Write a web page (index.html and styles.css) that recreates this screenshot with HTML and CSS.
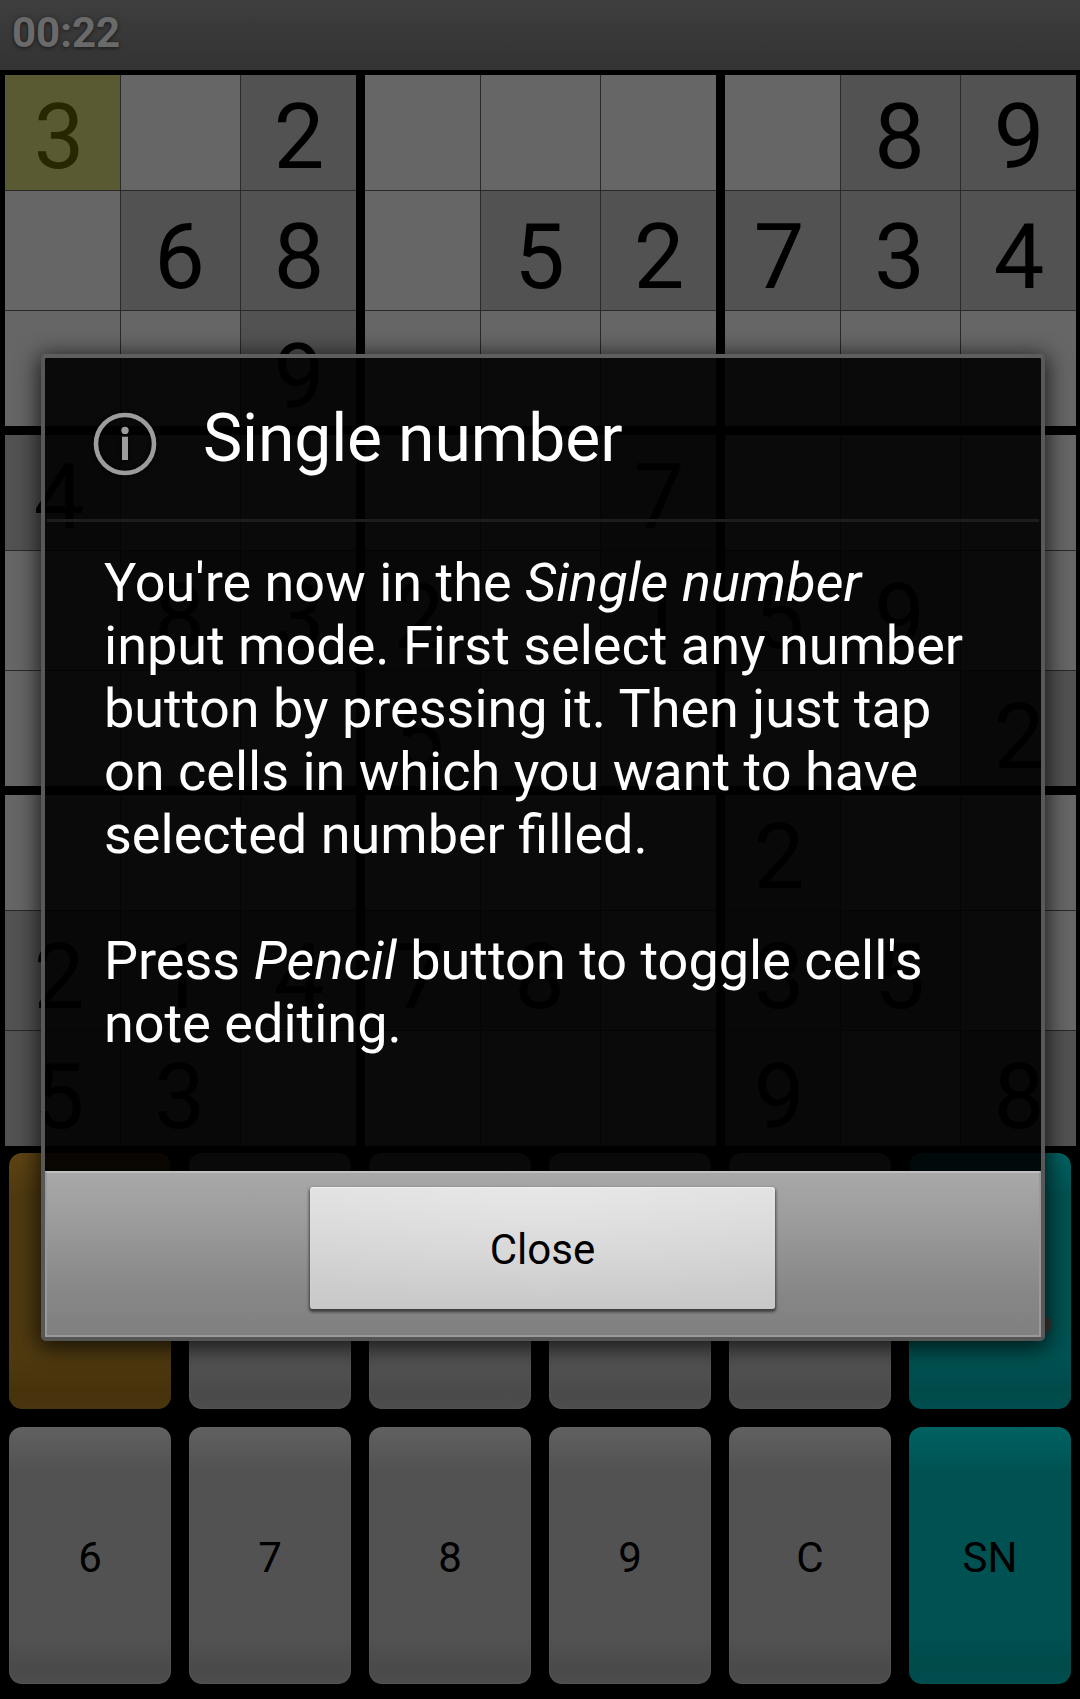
FILE: index.html
```html
<!DOCTYPE html>
<html lang="en">
<head>
<meta charset="utf-8">
<title>Sudoku</title>
<link rel="stylesheet" href="styles.css">
</head>
<body>
<div class="screen">
  <header class="status">00:22</header>

  <main class="board">
    <section class="box">
      <div class="cell selected">3</div><div class="cell"></div><div class="cell given">2</div>
      <div class="cell"></div><div class="cell given">6</div><div class="cell given">8</div>
      <div class="cell"></div><div class="cell"></div><div class="cell given">9</div>
    </section>
    <section class="box">
      <div class="cell"></div><div class="cell"></div><div class="cell"></div>
      <div class="cell"></div><div class="cell given">5</div><div class="cell given">2</div>
      <div class="cell"></div><div class="cell"></div><div class="cell"></div>
    </section>
    <section class="box">
      <div class="cell"></div><div class="cell given">8</div><div class="cell given">9</div>
      <div class="cell given">7</div><div class="cell given">3</div><div class="cell given">4</div>
      <div class="cell"></div><div class="cell"></div><div class="cell"></div>
    </section>
    <section class="box">
      <div class="cell given">4</div><div class="cell"></div><div class="cell"></div>
      <div class="cell"></div><div class="cell given">8</div><div class="cell given">3</div>
      <div class="cell"></div><div class="cell"></div><div class="cell"></div>
    </section>
    <section class="box">
      <div class="cell"></div><div class="cell"></div><div class="cell given">7</div>
      <div class="cell given">2</div><div class="cell"></div><div class="cell given">1</div>
      <div class="cell given">5</div><div class="cell"></div><div class="cell"></div>
    </section>
    <section class="box">
      <div class="cell"></div><div class="cell"></div><div class="cell"></div>
      <div class="cell given">5</div><div class="cell given">9</div><div class="cell"></div>
      <div class="cell"></div><div class="cell"></div><div class="cell given">2</div>
    </section>
    <section class="box">
      <div class="cell"></div><div class="cell"></div><div class="cell"></div>
      <div class="cell given">2</div><div class="cell given">1</div><div class="cell given">4</div>
      <div class="cell given">5</div><div class="cell given">3</div><div class="cell"></div>
    </section>
    <section class="box">
      <div class="cell"></div><div class="cell"></div><div class="cell"></div>
      <div class="cell given">7</div><div class="cell given">8</div><div class="cell"></div>
      <div class="cell"></div><div class="cell"></div><div class="cell"></div>
    </section>
    <section class="box">
      <div class="cell given">2</div><div class="cell"></div><div class="cell"></div>
      <div class="cell given">3</div><div class="cell given">5</div><div class="cell"></div>
      <div class="cell given">9</div><div class="cell"></div><div class="cell given">8</div>
    </section>
  </main>

  <nav class="keypad">
    <div class="key amber"></div><div class="key"></div><div class="key"></div>
    <div class="key"></div><div class="key"></div><div class="key teal"><span class="dot"></span></div>
    <div class="key">6</div><div class="key">7</div><div class="key">8</div>
    <div class="key">9</div><div class="key">C</div><div class="key teal">SN</div>
  </nav>

  <div class="dialog" role="dialog">
    <div class="dialog-head">
      <svg class="info" viewBox="0 0 66 66" width="66" height="66">
        <circle cx="33" cy="33" r="29" fill="none" stroke="#9c9c9c" stroke-width="4.6"/>
        <circle cx="33" cy="19.4" r="3.7" fill="#9c9c9c"/>
        <rect x="30" y="25.7" width="6" height="23.3" fill="#9c9c9c"/>
      </svg>
      <h1 class="title">Single number</h1>
    </div>
    <div class="dialog-body">
      <p>You're now in the <i>Single number</i><br>input mode. First select any number<br>button by pressing it. Then just tap<br>on cells in which you want to have<br>selected number filled.</p>
      <p>Press <i>Pencil</i> button to toggle cell's<br>note editing.</p>
    </div>
    <div class="dialog-foot">
      <button class="close">Close</button>
    </div>
  </div>
</div>
</body>
</html>
```
FILE: styles.css
```css
* { box-sizing: border-box; }

body {
  margin: 0;
  background: #000;
  font-family: Roboto, "Liberation Sans", sans-serif;
}

.screen {
  position: relative;
  width: 1080px;
  height: 1699px;
  overflow: hidden;
  background: #000;
}

.status {
  height: 70px;
  padding-left: 12px;
  background: linear-gradient(#3e3e3e, #333);
  color: #6a6a6a;
  font-size: 42px;
  font-weight: 700;
  line-height: 65px;
  text-shadow: 0 1px 4px rgba(0, 0, 0, .6);
}

.board {
  display: grid;
  grid-template-columns: repeat(3, 351px);
  grid-template-rows: repeat(3, 351px);
  gap: 9px;
  padding: 5px 4px 0 5px;
}

.box {
  display: grid;
  grid-template-columns: 115px 119px 115px;
  grid-template-rows: 115px 119px 115px;
  gap: 1px;
  background: #292929;
}

.cell {
  background: #666;
  color: #000;
  font-size: 90px;
  line-height: 134px;
  text-align: center;
  text-indent: -2px;
}

.cell:nth-child(-n+3) { line-height: 126px; }
.cell:nth-child(3n+1) { text-indent: -7px; }
.cell:nth-child(3n) { text-indent: 1px; }
.cell.given { background: #525252; }
.cell.selected { background: #5a5a32; color: #282800; }

.keypad {
  display: grid;
  grid-template-columns: repeat(6, 162px);
  grid-template-rows: 256px 257px;
  column-gap: 18px;
  row-gap: 18px;
  padding: 7px 9px 0;
}

.key {
  position: relative;
  border-radius: 13px;
  background: linear-gradient(#616161, #525252 17%, #525252 82%, #4a4a4a 94%, #4d4d4d);
  box-shadow: inset 0 0 2px 1px rgba(100, 100, 100, .3);
  font-size: 42px;
  line-height: 261px;
  text-align: center;
}

.key.amber {
  background: linear-gradient(#5e4414, #4f3a10 17%, #4f3a10 80%, #46330b 93%, #4a360e);
  box-shadow: none;
}

.key.teal {
  background: linear-gradient(#006262, #005252 17%, #005252 80%, #004a4a 93%, #004e4e);
  box-shadow: none;
}

.dot {
  position: absolute;
  left: 128px;
  top: 164px;
  width: 14px;
  height: 16px;
  border-radius: 50%;
  background: #4c3232;
  filter: blur(1.5px);
}

.dialog {
  position: absolute;
  left: 41px;
  top: 354px;
  width: 1004px;
  height: 987px;
  display: flex;
  flex-direction: column;
  border: 4px solid #585858;
  border-color: #5e5e5e #585858 #555;
  border-radius: 5px;
  background: rgba(0, 0, 0, .9);
  background-clip: padding-box;
  box-shadow: 0 4px 22px 3px rgba(0, 0, 0, .7);
}

.dialog-head {
  display: flex;
  height: 164px;
  margin: 0 2px;
  padding: 53px 0 0 45px;
  border-bottom: 3px solid #1d1d1d;
}

.info { flex: none; filter: drop-shadow(0 0 2px #000); }

.title {
  margin: -11px 0 0 45px;
  color: #fff;
  font-size: 66px;
  font-weight: 400;
  line-height: 77px;
  letter-spacing: -.15px;
}

.dialog-body {
  flex: 1;
  padding: 29px 0 0 59px;
  color: #fff;
  font-size: 54px;
  line-height: 63px;
  white-space: nowrap;
}

.dialog-body p { margin: 0 0 63px; }
.dialog-body i { letter-spacing: .15px; }

.dialog-foot {
  height: 166px;
  padding: 14px 0 0 263px;
  border: 2px solid #999;
  border-top: 2px solid #c0c0c0;
  background: linear-gradient(#a8a8a8, #a0a0a0 20%, #868686 75%, #808080);
}

.close {
  display: block;
  width: 465px;
  height: 122px;
  padding: 2px 0 0;
  border: 0;
  border-radius: 3px;
  background: radial-gradient(ellipse 75% 100% at 50% 0, rgba(255, 255, 255, .25), transparent), linear-gradient(#e0e0e0, #c8c8c8);
  box-shadow: 0 2px 3px 1px rgba(0, 0, 0, .55), inset 0 1px 1px #f0f0f0;
  color: #000;
  font: 400 42px Roboto, "Liberation Sans", sans-serif;
}
```
